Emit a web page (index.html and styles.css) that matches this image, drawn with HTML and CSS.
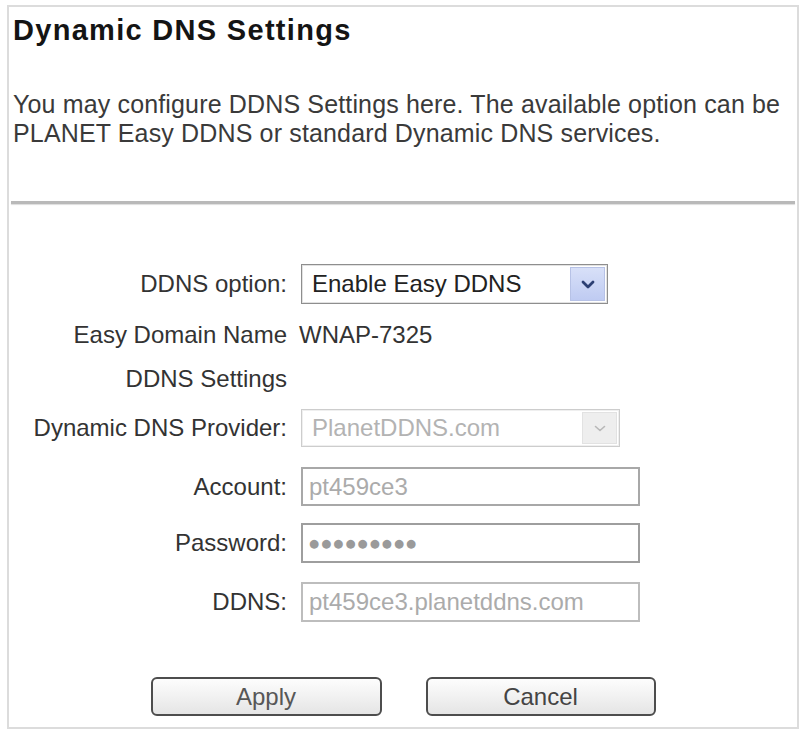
FILE: index.html
```html
<!DOCTYPE html>
<html lang="en">
<head>
<meta charset="utf-8">
<title>Dynamic DNS Settings</title>
<link rel="stylesheet" href="styles.css">
</head>
<body>
<div class="panel">
  <h1 class="title">Dynamic DNS Settings</h1>
  <p class="desc">You may configure DDNS Settings here. The available option can be PLANET Easy DDNS or standard Dynamic DNS services.</p>
  <div class="divider"></div>
  <form class="form">
    <div class="row r1">
      <span class="label">DDNS option:</span>
      <div class="select sel-main">
        <span class="sel-text">Enable Easy DDNS</span>
        <span class="sel-arrow"><svg width="14" height="9" viewBox="0 0 14 9"><path d="M2 2 L7 7 L12 2" fill="none" stroke="#2c3f73" stroke-width="2.8" stroke-linecap="round" stroke-linejoin="round"/></svg></span>
      </div>
    </div>
    <div class="row r2">
      <span class="label">Easy Domain Name</span>
      <span class="value">WNAP-7325</span>
    </div>
    <div class="row r3">
      <span class="label">DDNS Settings</span>
    </div>
    <div class="row r4">
      <span class="label">Dynamic DNS Provider:</span>
      <div class="select sel-dis">
        <span class="sel-text">PlanetDDNS.com</span>
        <span class="sel-arrow"><svg width="14" height="9" viewBox="0 0 14 9"><path d="M2.5 2.5 L7 6.5 L11.5 2.5" fill="none" stroke="#b8b8b8" stroke-width="1.6" stroke-linecap="round" stroke-linejoin="round"/></svg></span>
      </div>
    </div>
    <div class="row r5">
      <span class="label">Account:</span>
      <div class="field">pt459ce3</div>
    </div>
    <div class="row r6">
      <span class="label">Password:</span>
      <div class="field field-pw"><span class="dots">●●●●●●●●●</span></div>
    </div>
    <div class="row r7">
      <span class="label">DDNS:</span>
      <div class="field field-light">pt459ce3.planetddns.com</div>
    </div>
    <div class="buttons">
      <button type="button" class="btn btn-apply">Apply</button>
      <button type="button" class="btn btn-cancel">Cancel</button>
    </div>
  </form>
</div>
</body>
</html>
```

FILE: styles.css
```css
html, body {
  margin: 0;
  padding: 0;
  background: #ffffff;
}

body {
  font-family: "Liberation Sans", Arial, sans-serif;
  color: #333333;
}

.panel {
  box-sizing: border-box;
  width: 792px;
  height: 724px;
  margin: 5px 0 0 7px;
  border: 2px solid #dcdcdc;
  background: #ffffff;
}

.title {
  margin: 0;
  padding: 7px 0 0 4px;
  font-size: 29px;
  line-height: 32px;
  font-weight: bold;
  letter-spacing: 1.3px;
  color: #141414;
}

.desc {
  margin: 44px 0 0;
  padding: 0 4px;
  font-size: 25px;
  line-height: 29px;
  letter-spacing: 0.15px;
  color: #3a3a3a;
}

.divider {
  height: 3px;
  margin: 53px 2px 0;
  background: #b9b9b9;
  box-shadow: 0 1px 1px #dddddd;
}

.form {
  margin: 60px 0 0;
}

.row {
  display: flex;
  align-items: center;
  gap: 12px;
  font-size: 24px;
  line-height: 28px;
}

.r2 { margin-top: 17px; }
.r3 { margin-top: 16px; }
.r4 { margin-top: 16px; }
.r5 { margin-top: 20px; }
.r6 { margin-top: 17px; }
.r7 { margin-top: 19px; }

.label {
  flex: none;
  width: 278px;
  text-align: right;
  color: #333333;
}

.value {
  color: #333333;
}

.select {
  box-sizing: border-box;
  display: flex;
  align-items: stretch;
  margin-left: 2px;
  padding: 2px;
  background: #ffffff;
}

.sel-main {
  width: 307px;
  height: 40px;
  border: 1px solid #8e8e8e;
  box-shadow: inset 0 0 0 1px #e2e2e2;
}

.sel-dis {
  width: 319px;
  height: 38px;
  border: 1px solid #cdcdcd;
  box-shadow: inset 0 0 0 1px #efefef;
}

.sel-text {
  flex: 1;
  display: flex;
  align-items: center;
  padding-left: 8px;
  color: #222222;
}

.sel-dis .sel-text {
  color: #b3b3b3;
}

.sel-arrow {
  flex: none;
  width: 33px;
  display: flex;
  align-items: center;
  justify-content: center;
}

.sel-main .sel-arrow {
  background: linear-gradient(#d8e0f8, #bfcbf2);
  border: 1px solid #b7c2e6;
}

.sel-dis .sel-arrow {
  background: #eeeeee;
  border: 1px solid #e2e2e2;
}

.field {
  box-sizing: border-box;
  display: flex;
  align-items: center;
  width: 339px;
  height: 40px;
  margin-left: 2px;
  padding-left: 6px;
  border: 2px solid #a8a8a8;
  background: #ffffff;
  color: #ababab;
}

.r5 .field {
  height: 39px;
}

.field-light {
  border-color: #bdbdbd;
}

.field-pw {
  border-color: #9e9e9e;
}

.dots {
  font-family: "DejaVu Sans", sans-serif;
  font-size: 11.5px;
  letter-spacing: 2.1px;
  color: #9a9a9a;
}

.buttons {
  display: flex;
  justify-content: center;
  gap: 44px;
  margin-top: 55px;
}

.btn {
  box-sizing: border-box;
  width: 231px;
  height: 39px;
  padding: 0;
  border: 2px solid #4d4d4d;
  border-radius: 6px;
  background: linear-gradient(#fdfdfd, #e5e5e5);
  font-family: "Liberation Sans", Arial, sans-serif;
  font-size: 24px;
  color: #575757;
}

.btn-cancel {
  width: 230px;
  color: #444444;
}
```
